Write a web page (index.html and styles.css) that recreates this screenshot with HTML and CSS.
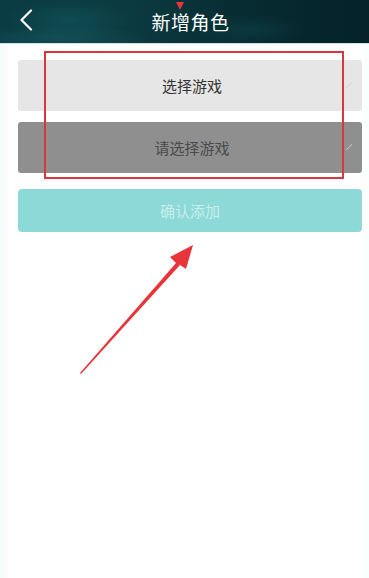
FILE: index.html
```html
<!DOCTYPE html>
<html lang="zh">
<head>
<meta charset="utf-8">
<link rel="stylesheet" href="styles.css">
</head>
<body>
<div class="page">
  <header class="topbar">
    <svg class="back" width="14" height="22" viewBox="0 0 14 22"><path d="M12 1.5 L2.5 11 L12 20.5" fill="none" stroke="#fff" stroke-width="2.2" stroke-linecap="round" stroke-linejoin="round"/></svg>
    <h1 class="title">新增角色</h1>
  </header>
  <main class="form">
    <div class="select select-light"><span>选择游戏</span><i class="chev"></i></div>
    <div class="select select-dark"><span>请选择游戏</span><i class="chev"></i></div>
    <button class="submit">确认添加</button>
  </main>
  <div class="mark-tri"></div>
  <div class="mark-box"></div>
  <svg class="mark-arrow" width="369" height="578" viewBox="0 0 369 578">
    <polygon points="80,373 176,263 170,257 193,245 186,269 180,265 81,374" fill="#e8353a"/>
  </svg>
</div>
</body>
</html>
```
FILE: styles.css
```css
html, body { margin: 0; padding: 0; }
body {
  width: 369px;
  height: 578px;
  overflow: hidden;
  background: #fff;
  font-family: "Noto Sans CJK SC", "Noto Sans", sans-serif;
}
.page {
  position: relative;
  width: 369px;
  height: 578px;
  background: linear-gradient(90deg, #f4fcfc 0px, #fcfefe 8px, #fff 12px, #fff 362px, #f9fefe 369px);
}
.topbar {
  height: 44px;
  display: flex;
  align-items: center;
  justify-content: center;
  position: relative;
  background:
    radial-gradient(ellipse 90px 30px at 70px 20px, rgba(20,90,95,0.55), transparent 70%),
    radial-gradient(ellipse 120px 18px at 60px 38px, rgba(30,100,105,0.45), transparent 75%),
    radial-gradient(ellipse 80px 22px at 250px 30px, rgba(15,70,75,0.5), transparent 70%),
    linear-gradient(90deg, #0a3c44 0%, #0b3a40 35%, #062a30 70%, #052229 100%);
  border-bottom: 1px solid #cfe3e3;
  box-sizing: border-box;
}
.back {
  position: absolute;
  left: 19px;
  top: 9px;
}
.title {
  margin: 0;
  font-size: 19px;
  font-weight: 400;
  color: #fff;
  letter-spacing: 0.5px;
  line-height: 1;
  padding-left: 12px;
}
.form {
  display: flex;
  flex-direction: column;
  padding: 16px 7px 0 18px;
}
.select {
  position: relative;
  height: 51px;
  border-radius: 3px;
  display: flex;
  align-items: center;
  justify-content: center;
  font-size: 15px;
}
.select span { padding-left: 4px; }
.select-light { background: #e6e6e6; color: #333; }
.select-dark { background: #8f8f8f; color: #4a4a4a; margin-top: 11px; }
.chev {
  position: absolute;
  right: 12px;
  top: 20px;
  width: 3px;
  height: 8px;
  border-right: 1.5px solid rgba(255,255,255,0.45);
  transform: rotate(45deg);
}
.select-light .chev { border-color: #d2d2d2; }
.submit {
  margin-top: 16px;
  height: 43px;
  border: none;
  border-radius: 4px;
  background: #8cd9d8;
  color: #c9eeee;
  font-family: inherit;
  font-size: 15px;
  padding: 0;
}
.mark-tri {
  position: absolute;
  left: 176px;
  top: 2px;
  width: 0;
  height: 0;
  border-left: 4px solid transparent;
  border-right: 4px solid transparent;
  border-top: 8px solid #e8353a;
}
.mark-box {
  position: absolute;
  left: 44px;
  top: 51px;
  width: 296px;
  height: 124px;
  border: 2px solid #d9363e;
}
.mark-arrow {
  position: absolute;
  left: 0;
  top: 0;
}
```
